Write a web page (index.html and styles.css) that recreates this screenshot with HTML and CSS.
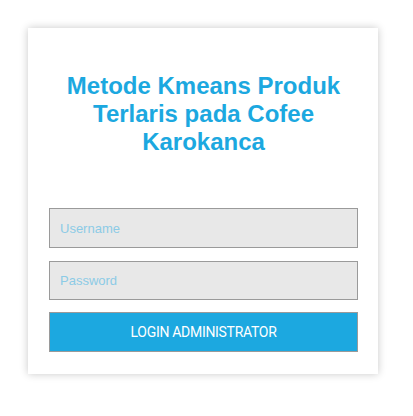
FILE: index.html
```html
<!DOCTYPE html>
<html>
<head>
<meta charset="utf-8">
<link rel="stylesheet" href="styles.css">
</head>
<body>
<div class="card">
  <h2 class="title">Metode Kmeans Produk Terlaris pada Cofee Karokanca</h2>
  <form class="form">
    <input class="field" type="text" placeholder="Username">
    <input class="field field-pass" type="password" placeholder="Password">
    <button class="btn" type="button">LOGIN ADMINISTRATOR</button>
  </form>
</div>
</body>
</html>
```

FILE: styles.css
```css
html, body {
  margin: 0;
  padding: 0;
  background: #fff;
}
body {
  padding: 28px 0 0 28px;
  min-height: 416px;
  box-sizing: border-box;
  font-family: "Liberation Sans", Arial, sans-serif;
}
.card {
  width: 350px;
  height: 346px;
  box-sizing: border-box;
  background: #fff;
  box-shadow: 0 0 8px rgba(0, 0, 0, 0.22);
  padding: 44px 20px 0 21px;
}
.title {
  margin: 0 0 52px;
  padding: 0 10px;
  font-size: 24px;
  line-height: 28px;
  font-weight: bold;
  color: #1ca8e0;
  text-align: center;
}
.form {
  display: flex;
  flex-direction: column;
}
.field {
  box-sizing: border-box;
  width: 309px;
  height: 40px;
  margin: 0 0 13px;
  padding: 0 10px;
  border: 1px solid #9a9a9a;
  background: #e8e8e8;
  font-family: "Liberation Sans", Arial, sans-serif;
  font-size: 13px;
  color: #333;
  outline: none;
}
.field-pass {
  height: 39px;
  margin-bottom: 12px;
}
.field::placeholder {
  color: #8ccbe6;
}
.btn {
  box-sizing: border-box;
  width: 309px;
  height: 40px;
  border: 1px solid #9a9a9a;
  background: #1ca8e0;
  color: #fff;
  font-family: Roboto, "Liberation Sans", Arial, sans-serif;
  font-size: 14px;
  letter-spacing: -0.3px;
  padding: 0;
}
```
